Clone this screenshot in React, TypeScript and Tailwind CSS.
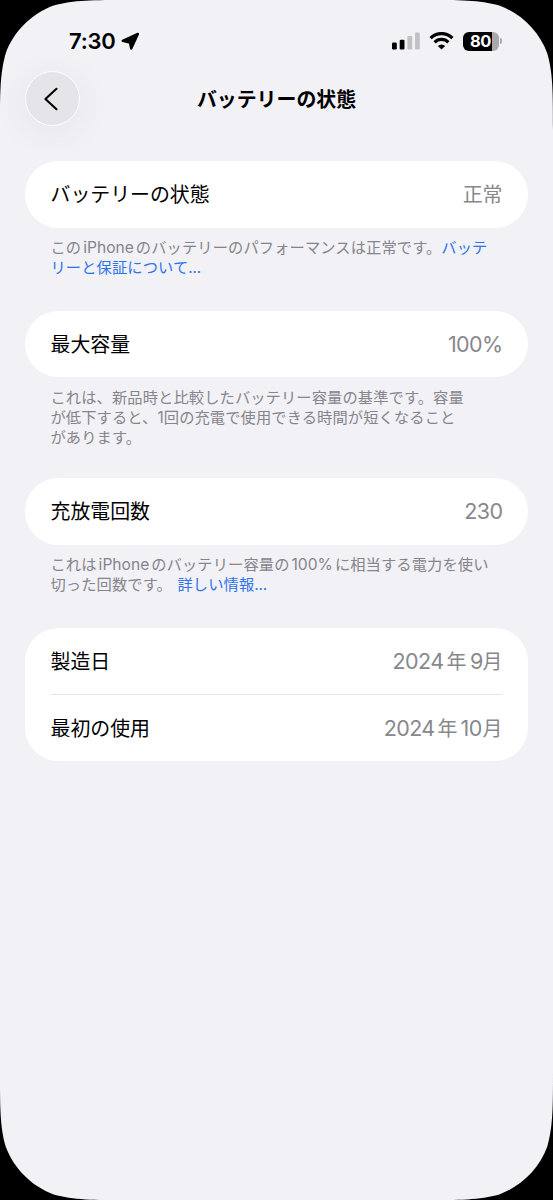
import type { ReactNode } from "react";

const CORNER =
  "M0 0H129.9C92.5 0 73.8 0 53.7 5.6C31.7 13.5 13.5 31.7 5.6 53.7C0 73.8 0 92.5 0 129.9Z";

function Corners() {
  return (
    <svg
      className="pointer-events-none absolute inset-0"
      width="553"
      height="1200"
      viewBox="0 0 553 1200"
      aria-hidden="true"
    >
      <path d={CORNER} />
      <path d={CORNER} transform="translate(553 0) scale(-1 1)" />
      <path d={CORNER} transform="translate(0 1200) scale(1 -1)" />
      <path d={CORNER} transform="translate(553 1200) scale(-1 -1)" />
    </svg>
  );
}

function StatusBar() {
  return (
    <div className="flex h-[71px] items-start justify-between pt-[29px] pr-[51px] pl-[69px]">
      <div className="flex h-6 items-center">
        <span className="w-[47px] font-['Inter',sans-serif] text-[22px] leading-6 font-semibold tracking-[-0.2px] whitespace-nowrap">
          7:30
        </span>
        <svg className="ml-[5px]" width="19" height="18" viewBox="0 0 19 18">
          <path
            d="M1.8 8.9L16.9 1.9L10.2 16.6L9 10.6Z"
            fill="#000"
            stroke="#000"
            strokeWidth="2.4"
            strokeLinejoin="round"
          />
        </svg>
      </div>
      <div className="flex h-6 items-center">
        <svg width="28" height="18" viewBox="0 0 28 18">
          <rect x="0" y="10.5" width="4.8" height="7" rx="1.3" />
          <rect x="7.7" y="7.8" width="4.8" height="9.7" rx="1.3" />
          <rect x="15.4" y="4" width="4.8" height="13.5" rx="1.3" fill="#c1c1c5" />
          <rect x="23" y="0.5" width="4.8" height="17" rx="1.3" fill="#c1c1c5" />
        </svg>
        <svg className="ml-[9px]" width="25" height="18" viewBox="0 0 25 18">
          <g fill="none" stroke="#000" strokeWidth="3.2">
            <path d="M1.6 6.1A15.3 15.3 0 0 1 23.4 6.1" />
            <path d="M5.6 10.4A9.6 9.6 0 0 1 19.4 10.4" />
          </g>
          <path d="M12.5 17.6L8.8 13.9A5.3 5.3 0 0 1 16.2 13.9Z" />
        </svg>
        <div className="ml-[9px] flex h-[19px] w-9 items-center justify-center overflow-hidden rounded-[6px] bg-linear-to-r from-black from-80% to-[#a9a9ad] to-80%">
          <span className="mr-[1px] font-['Inter',sans-serif] text-[16.5px] leading-none font-bold tracking-[-0.4px] text-white">
            80
          </span>
        </div>
        <div className="ml-px h-[6px] w-[2px] rounded-r-full bg-[#a9a9ad]" />
      </div>
    </div>
  );
}

function Header() {
  return (
    <header className="grid h-[90px] grid-cols-[1fr_auto_1fr] items-start px-[25px]">
      <button
        aria-label="戻る"
        className="flex size-[55px] items-center justify-center rounded-full border-[1.5px] border-white bg-[#e5e5e9] shadow-[0_6px_32px_8px_rgba(0,0,0,0.035)]"
      >
        <svg className="mr-[4px]" width="16" height="24" viewBox="0 0 16 24">
          <path
            d="M13.5 1.8L2.4 12L13.5 22.2"
            fill="none"
            stroke="#000"
            strokeWidth="2.1"
            strokeLinecap="round"
            strokeLinejoin="round"
          />
        </svg>
      </button>
      <h1 className="flex h-[55px] items-center text-[19.9px] font-semibold whitespace-nowrap">
        バッテリーの状態
      </h1>
    </header>
  );
}

function Num({ children }: { children: ReactNode }) {
  return (
    <span className="font-['Inter',sans-serif] text-[21.5px] leading-none tracking-[-0.6px]">
      {children}
    </span>
  );
}

function Small({ children }: { children: ReactNode }) {
  return (
    <span className="mx-[2px] font-['Inter',sans-serif] text-[15.6px] leading-none tracking-normal">
      {children}
    </span>
  );
}

function Link({ children }: { children: ReactNode }) {
  return (
    <a href="#" className="text-[#2f73ea]">
      {children}
    </a>
  );
}

function Dots() {
  return (
    <span className="font-['Inter',sans-serif] leading-none tracking-[-0.2px]">...</span>
  );
}

function Card({ children }: { children: ReactNode }) {
  return <div className="rounded-[33.4px] bg-white px-[25.5px]">{children}</div>;
}

function Row({ label, children }: { label: string; children: ReactNode }) {
  return (
    <div className="flex h-[66.6px] items-center justify-between text-[19.9px] leading-[30px] whitespace-nowrap">
      <span>{label}</span>
      <span className="text-[#88888c]">{children}</span>
    </div>
  );
}

function Note({ children }: { children: ReactNode }) {
  return (
    <div className="mt-[8.7px] px-[25.5px] text-[15.28px] leading-[20px] tracking-[0.1px] whitespace-nowrap text-[#85858b]">
      {children}
    </div>
  );
}

function Line({ children }: { children: ReactNode }) {
  return <p className="h-[20.1px]">{children}</p>;
}

export default function App() {
  return (
    <div className="relative h-[1200px] w-[553px] overflow-hidden bg-[#f1f1f6] font-['Noto_Sans_CJK_JP',sans-serif] text-black">
      <StatusBar />
      <Header />
      <main className="flex flex-col px-[25px]">
        <section className="h-[149.6px]">
          <Card>
            <Row label="バッテリーの状態">正常</Row>
          </Card>
          <Note>
            <Line>
              この<Small>iPhone</Small>のバッテリーのパフォーマンスは正常です。
              <Link>バッテ</Link>
            </Line>
            <Line>
              <Link>
                リーと保証について
                <Dots />
              </Link>
            </Line>
          </Note>
        </section>
        <section className="h-[167.4px]">
          <Card>
            <Row label="最大容量">
              <Num>100%</Num>
            </Row>
          </Card>
          <Note>
            <Line>これは、新品時と比較したバッテリー容量の基準です。容量</Line>
            <Line>
              が低下すると、
              <span className="font-['Inter',sans-serif] leading-none">1</span>
              回の充電で使用できる時間が短くなること
            </Line>
            <Line>があります。</Line>
          </Note>
        </section>
        <section className="h-[150px]">
          <Card>
            <Row label="充放電回数">
              <Num>230</Num>
            </Row>
          </Card>
          <Note>
            <Line>
              これは<Small>iPhone</Small>のバッテリー容量の<Small>100%</Small>
              に相当する電力を使い
            </Line>
            <Line>
              <span className="mr-[2px]">切った回数です。</span>{" "}
              <Link>
                詳しい情報
                <Dots />
              </Link>
            </Line>
          </Note>
        </section>
        <section>
          <Card>
            <Row label="製造日">
              <Num>2024</Num>
              <span className="mr-[3.5px] ml-[3px]">年</span>
              <Num>9</Num>月
            </Row>
            <div className="-my-[0.75px] h-[1.5px] bg-[#e6e6e8]" />
            <Row label="最初の使用">
              <Num>2024</Num>
              <span className="mr-[3px] ml-[3px]">年</span>
              <Num>10</Num>
              <span className="ml-px">月</span>
            </Row>
          </Card>
        </section>
      </main>
      <Corners />
    </div>
  );
}
